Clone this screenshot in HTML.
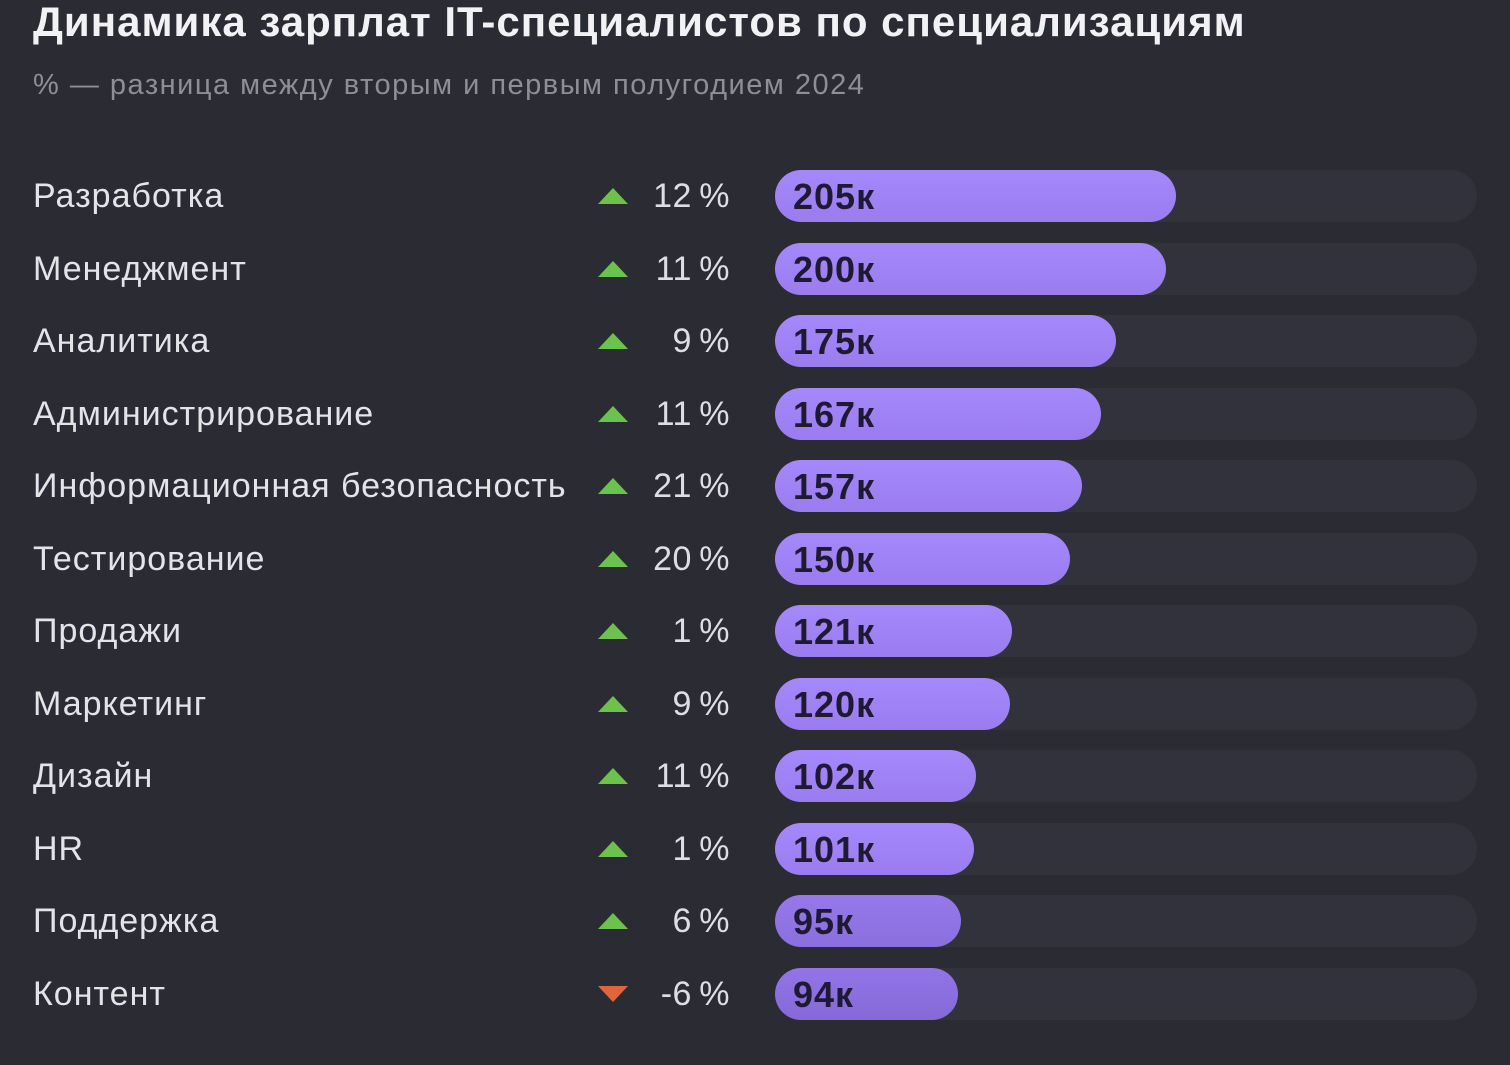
<!DOCTYPE html>
<html><head><meta charset="utf-8"><style>
*{margin:0;padding:0;box-sizing:border-box}
body{width:1510px;height:1065px;background:#2b2b34;font-family:"Liberation Sans",sans-serif;position:relative;overflow:hidden;color:#e8e8ec}
h1{position:absolute;left:33px;top:-2px;font-size:42px;font-weight:bold;color:#f2f2f5;letter-spacing:1.0px;white-space:nowrap}
.sub{position:absolute;left:33px;top:69px;font-size:29px;color:#8e8e98;letter-spacing:1.5px;white-space:nowrap}
.row{position:absolute;left:0;width:1510px;height:52px}
.lab{position:absolute;left:33px;top:7px;font-size:34px;letter-spacing:1px;color:#e4e4e8;white-space:nowrap}
.tri{position:absolute;left:598px;top:18px;width:0;height:0;border-left:15px solid transparent;border-right:15px solid transparent;border-bottom:16px solid #6cc24a}
.tri.dn{border-bottom:none;border-top:16px solid #e0643c}
.pct{position:absolute;right:780px;top:7px;font-size:34px;letter-spacing:0.5px;color:#dedee2;white-space:nowrap}
.track{position:absolute;left:775px;top:0;width:702px;height:52px;border-radius:26px;background:#32323c}
.bar{position:absolute;left:775px;top:0;height:52px;border-radius:26px;background:linear-gradient(#a588fa,#9a7cef)}
.val{position:absolute;left:793px;top:6px;font-size:36px;letter-spacing:1px;font-weight:bold;color:#1f1a33}
</style></head><body>
<h1>Динамика зарплат IT-специалистов по специализациям</h1>
<div class="sub">% — разница между вторым и первым полугодием 2024</div>

<div class="row" style="top:170px"><div class="lab">Разработка</div><div class="tri"></div><div class="pct">12&#8201;%</div><div class="track"></div><div class="bar" style="width:401px"></div><div class="val">205к</div></div>
<div class="row" style="top:243px"><div class="lab">Менеджмент</div><div class="tri"></div><div class="pct">11&#8201;%</div><div class="track"></div><div class="bar" style="width:391px"></div><div class="val">200к</div></div>
<div class="row" style="top:315px"><div class="lab">Аналитика</div><div class="tri"></div><div class="pct">9&#8201;%</div><div class="track"></div><div class="bar" style="width:341px"></div><div class="val">175к</div></div>
<div class="row" style="top:388px"><div class="lab">Администрирование</div><div class="tri"></div><div class="pct">11&#8201;%</div><div class="track"></div><div class="bar" style="width:326px"></div><div class="val">167к</div></div>
<div class="row" style="top:460px"><div class="lab">Информационная безопасность</div><div class="tri"></div><div class="pct">21&#8201;%</div><div class="track"></div><div class="bar" style="width:307px"></div><div class="val">157к</div></div>
<div class="row" style="top:533px"><div class="lab">Тестирование</div><div class="tri"></div><div class="pct">20&#8201;%</div><div class="track"></div><div class="bar" style="width:295px"></div><div class="val">150к</div></div>
<div class="row" style="top:605px"><div class="lab">Продажи</div><div class="tri"></div><div class="pct">1&#8201;%</div><div class="track"></div><div class="bar" style="width:237px"></div><div class="val">121к</div></div>
<div class="row" style="top:678px"><div class="lab">Маркетинг</div><div class="tri"></div><div class="pct">9&#8201;%</div><div class="track"></div><div class="bar" style="width:235px"></div><div class="val">120к</div></div>
<div class="row" style="top:750px"><div class="lab">Дизайн</div><div class="tri"></div><div class="pct">11&#8201;%</div><div class="track"></div><div class="bar" style="width:201px"></div><div class="val">102к</div></div>
<div class="row" style="top:823px"><div class="lab">HR</div><div class="tri"></div><div class="pct">1&#8201;%</div><div class="track"></div><div class="bar" style="width:199px"></div><div class="val">101к</div></div>
<div class="row" style="top:895px"><div class="lab">Поддержка</div><div class="tri"></div><div class="pct">6&#8201;%</div><div class="track"></div><div class="bar" style="width:186px;background:linear-gradient(#9678ea,#8b6fdd)"></div><div class="val">95к</div></div>
<div class="row" style="top:968px"><div class="lab">Контент</div><div class="tri dn"></div><div class="pct">-6&#8201;%</div><div class="track"></div><div class="bar" style="width:183px;background:linear-gradient(#9274e6,#8669d8)"></div><div class="val">94к</div></div>
</body></html>
